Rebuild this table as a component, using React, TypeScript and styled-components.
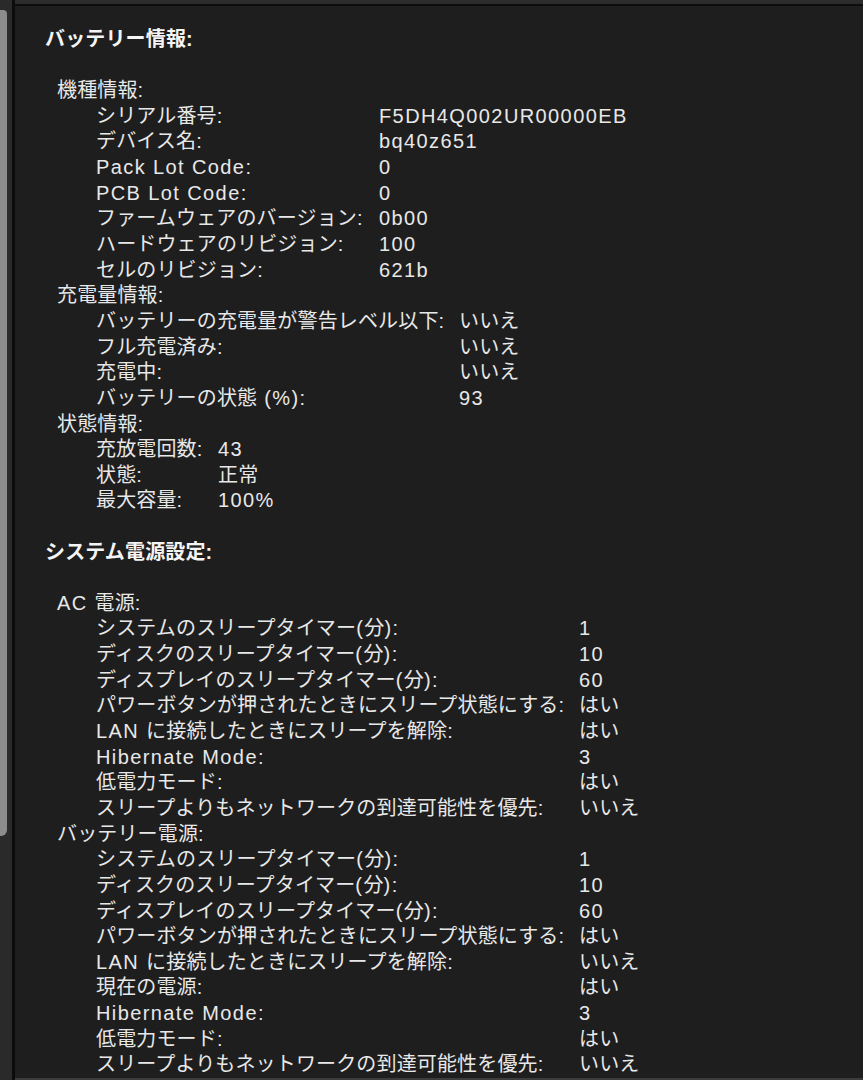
import React from "react";
import styled, { createGlobalStyle } from "styled-components";

const GlobalStyle = createGlobalStyle`
  html, body {
    margin: 0;
    padding: 0;
    background: #1e1e1e;
    overflow: hidden;
  }
  body {
    font-family: "Liberation Sans", "Noto Sans CJK JP", sans-serif;
  }
`;

const LINE = 25.65;

const Page = styled.div`
  display: flex;
  width: 863px;
  height: 1080px;
  background: #1e1e1e;
  overflow: hidden;
`;

const ScrollTrack = styled.div`
  width: 12px;
  flex: none;
  background: #2a2a2a;
  padding-top: 10px;
  box-sizing: border-box;
`;

const ScrollThumb = styled.div`
  width: 7px;
  height: 826px;
  background: #8c8c8c;
  border-radius: 0 4px 6px 0;
`;

const Divider = styled.div`
  width: 3px;
  flex: none;
  background: #0c0c0c;
`;

const Main = styled.div`
  flex: 1;
  display: flex;
  flex-direction: column;
  min-width: 0;
`;

const TopBar = styled.div`
  height: 4px;
  flex: none;
  background: #2c2c2c;
  border-bottom: 2px solid #0c0c0c;
`;

const Content = styled.div`
  flex: 1;
  background: #1e1e1e;
  padding: 21px 0 0 30px;
  display: flex;
  flex-direction: column;
  color: #e8e8e8;
  font-size: 20px;
  letter-spacing: 0.15px;
  overflow: hidden;
`;

const BottomLine = styled.div`
  height: 2px;
  flex: none;
  background: #3c3c3c;
`;

const Line = styled.div<{ $indent?: number; $bold?: boolean }>`
  height: ${LINE}px;
  line-height: ${LINE}px;
  padding-left: ${(p) => p.$indent ?? 0}px;
  font-weight: ${(p) => (p.$bold ? 700 : 400)};
  color: ${(p) => (p.$bold ? "#f4f4f4" : "#e8e8e8")};
  white-space: nowrap;
`;

const Group = styled.div<{ $labelWidth: number }>`
  display: grid;
  grid-template-columns: ${(p) => p.$labelWidth}px auto;
  grid-auto-rows: ${LINE}px;
  padding-left: 51px;
  line-height: ${LINE}px;
  white-space: nowrap;
`;

const Label = styled.span``;
const Value = styled.span``;

const Latin = styled.span`
  letter-spacing: 1.4px;
`;

function renderText(s: string) {
  return s
    .split(/([\x20-\x7E]+)/)
    .filter((p) => p.length > 0)
    .map((p, i) => (/^[\x20-\x7E]+$/.test(p) ? <Latin key={i}>{p}</Latin> : <React.Fragment key={i}>{p}</React.Fragment>));
}

type GroupData = { title: string; labelWidth: number; rows: [string, string][] };
type SectionData = { title: string; groups: GroupData[] };

const sections: SectionData[] = [
  {
    title: "バッテリー情報:",
    groups: [
      {
        title: "機種情報:",
        labelWidth: 283,
        rows: [
          ["シリアル番号:", "F5DH4Q002UR00000EB"],
          ["デバイス名:", "bq40z651"],
          ["Pack Lot Code:", "0"],
          ["PCB Lot Code:", "0"],
          ["ファームウェアのバージョン:", "0b00"],
          ["ハードウェアのリビジョン:", "100"],
          ["セルのリビジョン:", "621b"],
        ],
      },
      {
        title: "充電量情報:",
        labelWidth: 363,
        rows: [
          ["バッテリーの充電量が警告レベル以下:", "いいえ"],
          ["フル充電済み:", "いいえ"],
          ["充電中:", "いいえ"],
          ["バッテリーの状態 (%):", "93"],
        ],
      },
      {
        title: "状態情報:",
        labelWidth: 122,
        rows: [
          ["充放電回数:", "43"],
          ["状態:", "正常"],
          ["最大容量:", "100%"],
        ],
      },
    ],
  },
  {
    title: "システム電源設定:",
    groups: [
      {
        title: "AC 電源:",
        labelWidth: 483,
        rows: [
          ["システムのスリープタイマー(分):", "1"],
          ["ディスクのスリープタイマー(分):", "10"],
          ["ディスプレイのスリープタイマー(分):", "60"],
          ["パワーボタンが押されたときにスリープ状態にする:", "はい"],
          ["LAN に接続したときにスリープを解除:", "はい"],
          ["Hibernate Mode:", "3"],
          ["低電力モード:", "はい"],
          ["スリープよりもネットワークの到達可能性を優先:", "いいえ"],
        ],
      },
      {
        title: "バッテリー電源:",
        labelWidth: 483,
        rows: [
          ["システムのスリープタイマー(分):", "1"],
          ["ディスクのスリープタイマー(分):", "10"],
          ["ディスプレイのスリープタイマー(分):", "60"],
          ["パワーボタンが押されたときにスリープ状態にする:", "はい"],
          ["LAN に接続したときにスリープを解除:", "いいえ"],
          ["現在の電源:", "はい"],
          ["Hibernate Mode:", "3"],
          ["低電力モード:", "はい"],
          ["スリープよりもネットワークの到達可能性を優先:", "いいえ"],
        ],
      },
    ],
  },
];

export default function App() {
  return (
    <>
      <GlobalStyle />
      <Page>
        <ScrollTrack>
          <ScrollThumb />
        </ScrollTrack>
        <Divider />
        <Main>
          <TopBar />
          <Content>
            {sections.map((s, si) => (
              <React.Fragment key={si}>
                <Line $bold>{renderText(s.title)}</Line>
                <Line />
                {s.groups.map((g, gi) => (
                  <React.Fragment key={gi}>
                    <Line $indent={12}>{renderText(g.title)}</Line>
                    <Group $labelWidth={g.labelWidth}>
                      {g.rows.map(([l, v], ri) => (
                        <React.Fragment key={ri}>
                          <Label>{renderText(l)}</Label>
                          <Value>{renderText(v)}</Value>
                        </React.Fragment>
                      ))}
                    </Group>
                  </React.Fragment>
                ))}
                {si === 0 && <Line />}
              </React.Fragment>
            ))}
          </Content>
          <BottomLine />
        </Main>
      </Page>
    </>
  );
}
